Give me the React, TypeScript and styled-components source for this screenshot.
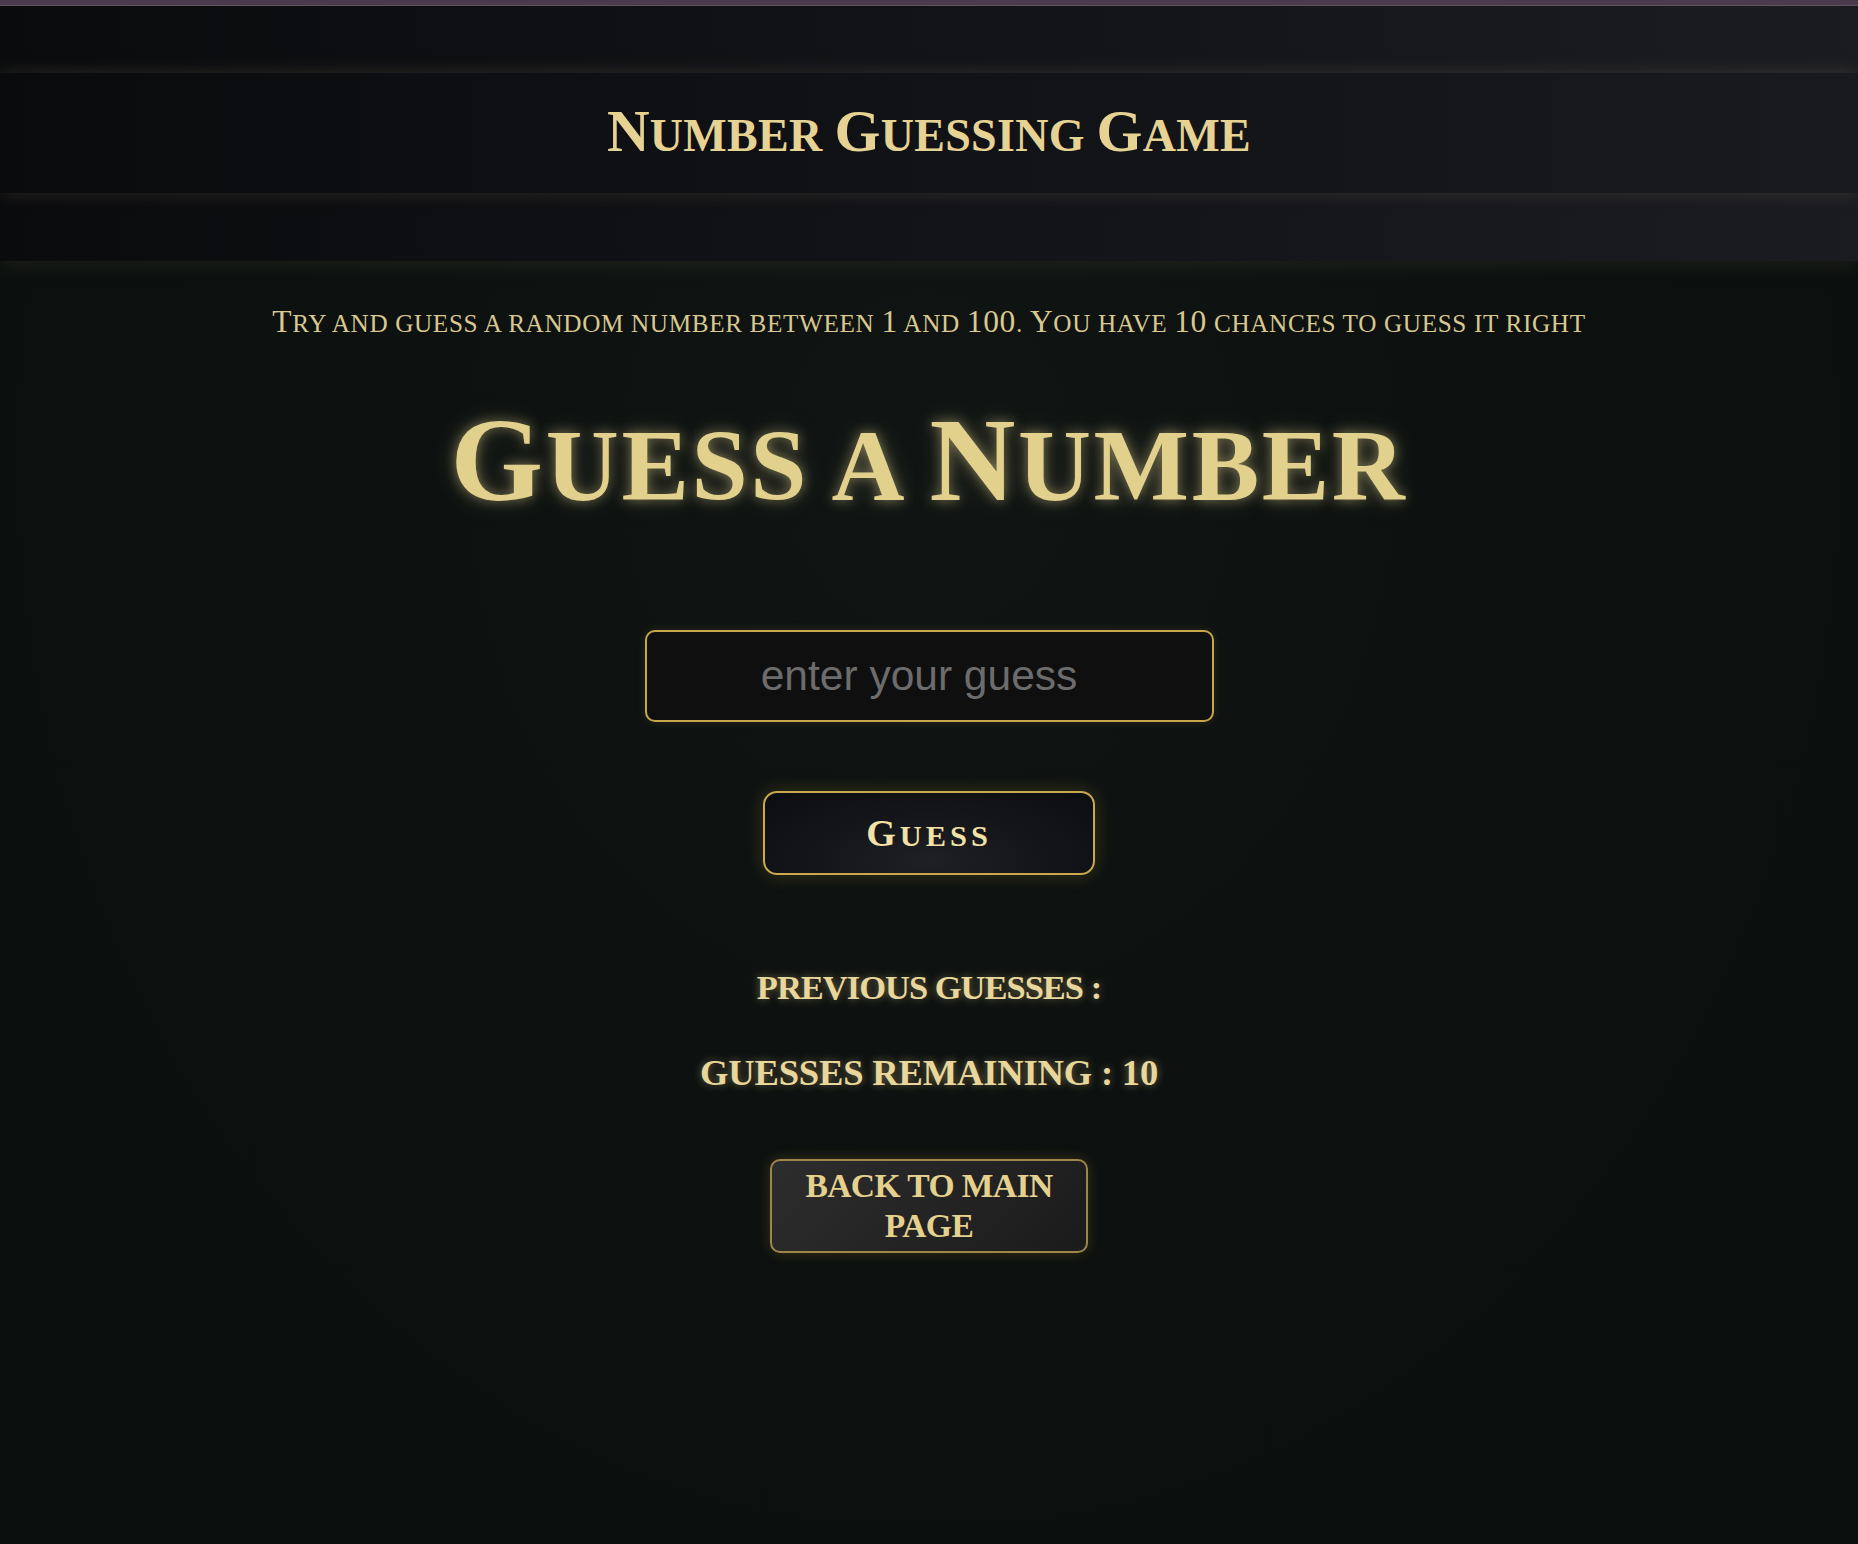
import React from "react";
import styled, { createGlobalStyle } from "styled-components";

const GlobalStyle = createGlobalStyle`
  html, body {
    margin: 0;
    padding: 0;
    background: #0c100f;
  }
  body {
    font-family: "Liberation Serif", "DejaVu Serif", serif;
  }
  * { box-sizing: border-box; }
`;

const Page = styled.div`
  min-height: 1544px;
  display: flex;
  flex-direction: column;
  background: radial-gradient(ellipse at 50% 30%, #101514 0%, #0c100f 55%, #0b0f0e 100%);
`;

const TopStrip = styled.div`
  height: 6px;
  background: #4a3a4d;
  border-bottom: 1px solid #5f4e62;
`;

const Header = styled.header`
  position: relative;
  z-index: 1;
  padding: 67px 0 68px;
  background: linear-gradient(90deg, #0a0b0d 0%, #131418 55%, #1b1c20 100%);
  box-shadow: 0 6px 18px rgba(200, 185, 110, 0.08);
`;

const TitleBar = styled.div`
  height: 120px;
  display: flex;
  align-items: center;
  justify-content: center;
  background: linear-gradient(90deg, #0a0b0d 0%, #121317 55%, #191a1e 100%);
  box-shadow: 0 0 18px rgba(200, 185, 150, 0.16);
`;

const Title = styled.h1`
  margin: 0 0 4px;
  font-size: 59px;
  font-weight: 700;
  line-height: 1.2;
  color: #e6d292;
  letter-spacing: 0.3px;
`;

const Main = styled.main`
  display: flex;
  flex-direction: column;
  align-items: center;
  padding-top: 42px;
`;

const Intro = styled.p`
  margin: 0;
  font-size: 31.5px;
  font-weight: 400;
  line-height: 1.2;
  color: #d9c88f;
  letter-spacing: 0.65px;
`;

const Heading = styled.h2`
  margin: 48px 0 0;
  font-size: 119px;
  font-weight: 700;
  line-height: 1.2;
  color: #e2d08d;
  letter-spacing: 2.6px;
  text-shadow: 0 0 12px rgba(226, 208, 141, 0.5), 0 0 26px rgba(226, 208, 141, 0.22);
`;

const GuessInput = styled.input`
  margin-top: 98px;
  width: 569px;
  height: 92px;
  padding: 0 20px 0 0;
  border: 2px solid #c6a54c;
  border-radius: 10px;
  background: #0f0f10;
  color: #e5d18e;
  font-family: "Liberation Sans", Arial, sans-serif;
  font-size: 42.5px;
  text-align: center;
  outline: none;
  box-shadow: 0 0 10px rgba(212, 175, 55, 0.14);
  &::placeholder {
    color: #6c6c6c;
  }
`;

const GuessButton = styled.button`
  margin-top: 69px;
  width: 332px;
  height: 84px;
  border: 2px solid #c9a84e;
  border-radius: 14px;
  background: radial-gradient(ellipse at 50% 85%, #1f2025 0%, #15161a 45%, #0c0d10 100%);
  color: #f2e2a6;
  font-family: "Liberation Serif", serif;
  font-size: 38px;
  font-weight: 700;
  letter-spacing: 4px;
  display: flex;
  align-items: center;
  justify-content: center;
  box-shadow: 0 0 18px rgba(212, 175, 55, 0.22);
  cursor: pointer;
`;

const InfoLine = styled.p<{ $size: number; $gap: number; $spacing: number }>`
  margin: ${(p) => p.$gap}px 0 0;
  font-size: ${(p) => p.$size}px;
  font-weight: 700;
  line-height: 1.2;
  letter-spacing: ${(p) => p.$spacing}px;
  color: #e8d69a;
  text-shadow: 0 0 8px rgba(230, 210, 140, 0.45);
`;

const BackButton = styled.button`
  margin-top: 64px;
  width: 318px;
  padding: 5px 20px;
  border: 2px solid #9d8647;
  border-radius: 10px;
  background: linear-gradient(135deg, #2d2d2d 0%, #242424 50%, #1b1b1b 100%);
  color: #e5d18e;
  font-family: "Liberation Serif", serif;
  font-size: 33.6px;
  font-weight: 700;
  line-height: 40px;
  letter-spacing: -0.6px;
  box-shadow: 0 0 14px rgba(212, 175, 55, 0.22);
  cursor: pointer;
`;

const Lower = styled.span<{ $ratio: number }>`
  font-size: ${(p) => p.$ratio}em;
  text-transform: uppercase;
`;

function Caps({ text, ratio = 0.8 }: { text: string; ratio?: number }) {
  const parts = text.match(/[A-Z0-9]+|[^A-Z0-9]+/g) ?? [];
  return (
    <>
      {parts.map((part, i) =>
        /[A-Z0-9]/.test(part[0]) ? (
          <React.Fragment key={i}>{part}</React.Fragment>
        ) : (
          <Lower key={i} $ratio={ratio}>
            {part}
          </Lower>
        )
      )}
    </>
  );
}

export default function App() {
  return (
    <>
      <GlobalStyle />
      <Page>
        <TopStrip />
        <Header>
          <TitleBar>
            <Title>
              <Caps text="Number Guessing Game" ratio={0.78} />
            </Title>
          </TitleBar>
        </Header>
        <Main>
          <Intro>
            <Caps text="Try and guess a random number between 1 and 100. You have 10 chances to guess it right" />
          </Intro>
          <Heading>
            <Caps text="Guess a Number" ratio={0.85} />
          </Heading>
          <GuessInput type="text" placeholder="enter your guess" />
          <GuessButton>
            <span>
              <Caps text="Guess" />
            </span>
          </GuessButton>
          <InfoLine $size={34.5} $gap={92} $spacing={-1}>
            PREVIOUS GUESSES :
          </InfoLine>
          <InfoLine $size={36.6} $gap={43} $spacing={-0.2}>
            GUESSES REMAINING : 10
          </InfoLine>
          <BackButton>BACK TO MAIN PAGE</BackButton>
        </Main>
      </Page>
    </>
  );
}
